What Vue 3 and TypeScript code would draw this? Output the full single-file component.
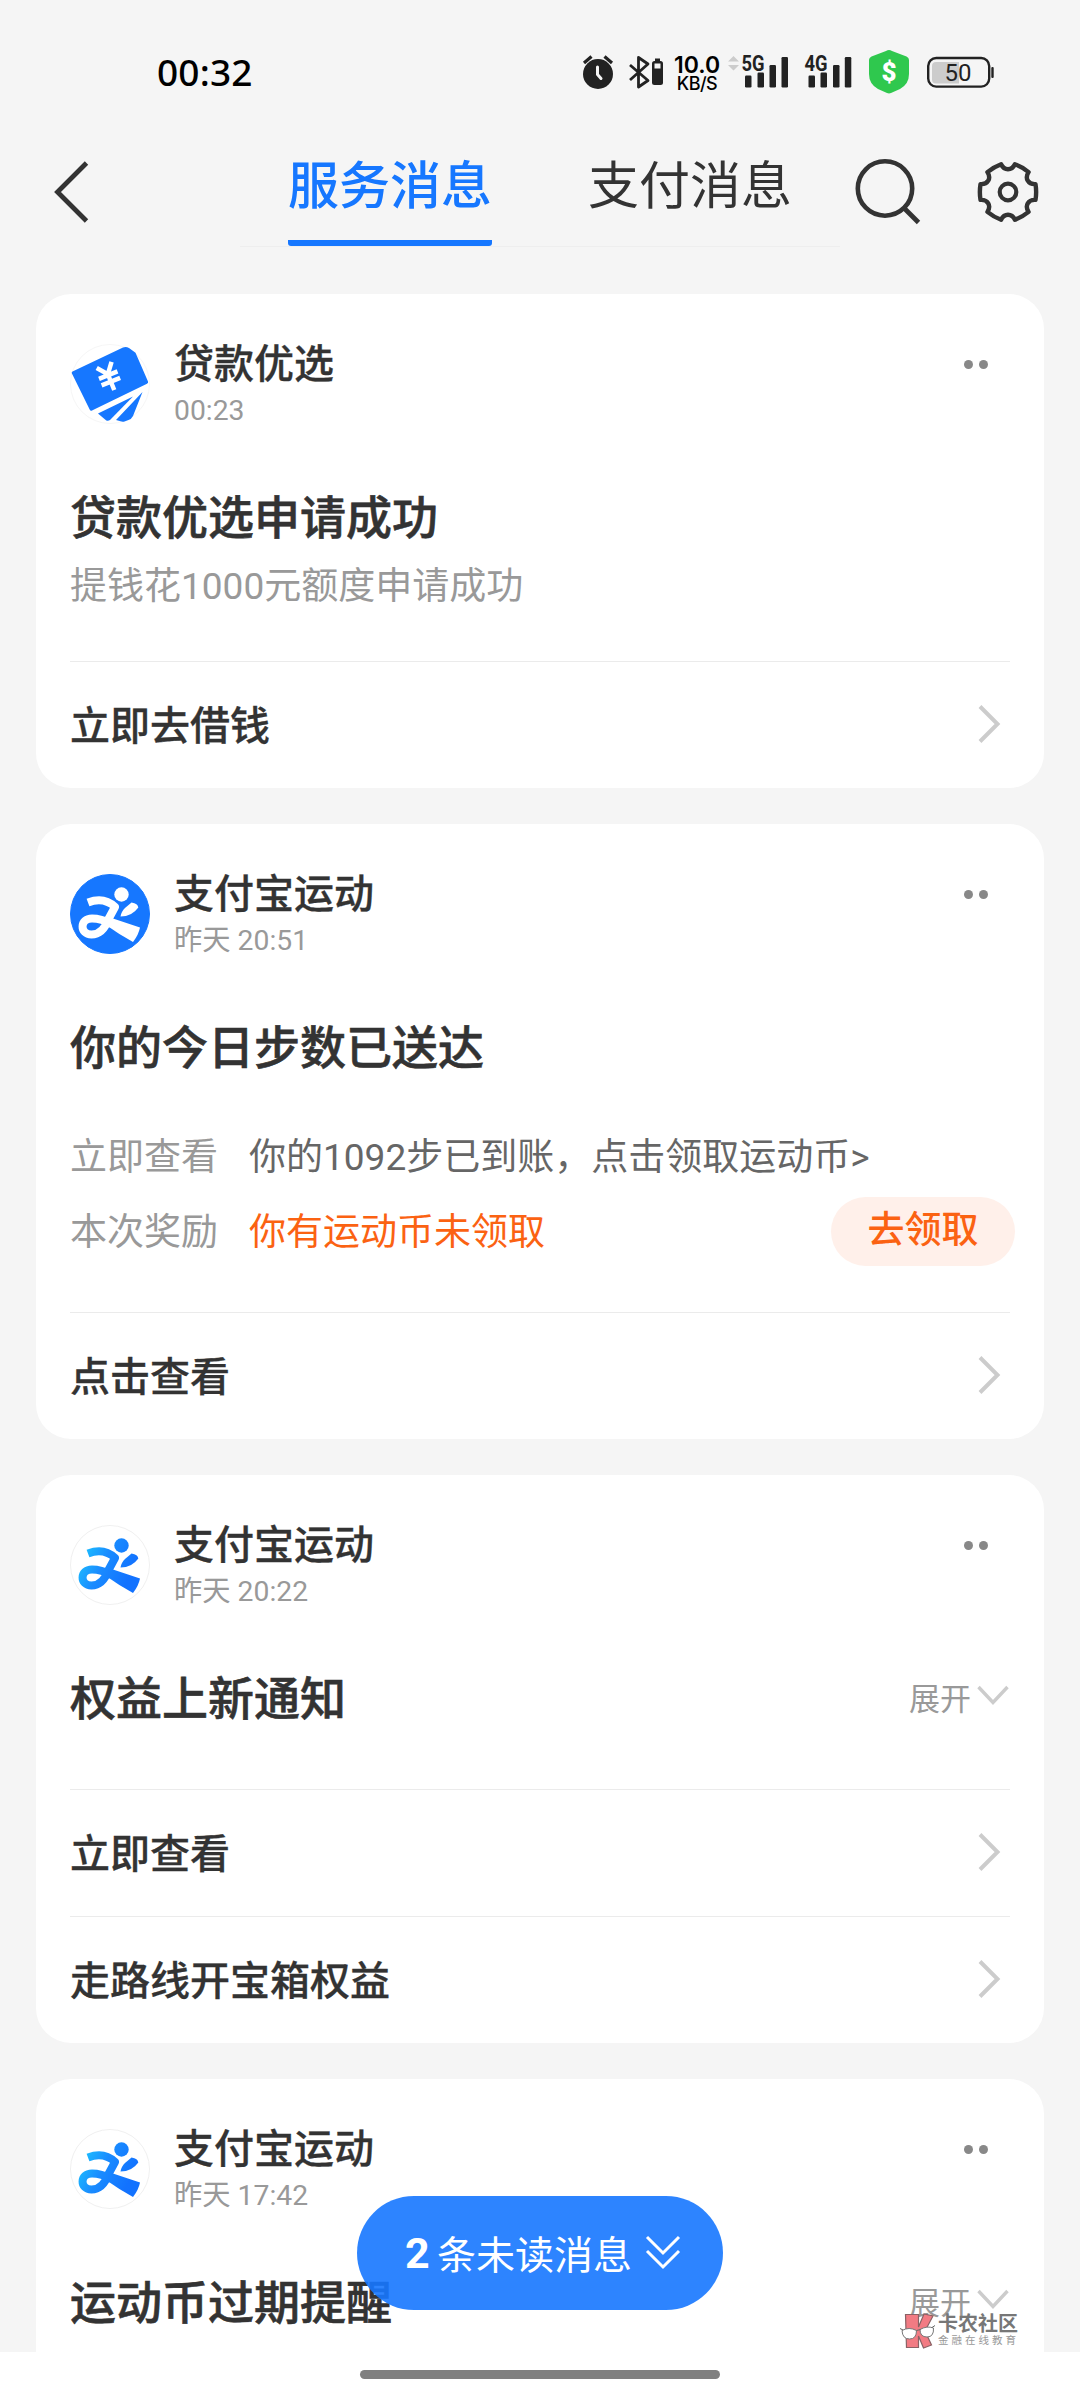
<script setup lang="ts">
interface DetailRow {
  label: string
  value: string
  highlight?: boolean
  button?: string
}

interface Message {
  id: number
  icon: 'loan' | 'sport-solid' | 'sport-light'
  sender: string
  time: string
  title: string
  summary?: string
  rows?: DetailRow[]
  expandable?: boolean
  actions: string[]
}

const messages: Message[] = [
  {
    id: 1,
    icon: 'loan',
    sender: '贷款优选',
    time: '00:23',
    title: '贷款优选申请成功',
    summary: '提钱花1000元额度申请成功',
    actions: ['立即去借钱'],
  },
  {
    id: 2,
    icon: 'sport-solid',
    sender: '支付宝运动',
    time: '昨天 20:51',
    title: '你的今日步数已送达',
    rows: [
      { label: '立即查看', value: '你的1092步已到账，点击领取运动币>' },
      { label: '本次奖励', value: '你有运动币未领取', highlight: true, button: '去领取' },
    ],
    actions: ['点击查看'],
  },
  {
    id: 3,
    icon: 'sport-light',
    sender: '支付宝运动',
    time: '昨天 20:22',
    title: '权益上新通知',
    expandable: true,
    actions: ['立即查看', '走路线开宝箱权益'],
  },
  {
    id: 4,
    icon: 'sport-light',
    sender: '支付宝运动',
    time: '昨天 17:42',
    title: '运动币过期提醒',
    expandable: true,
    actions: [],
  },
]

const unread = 2

// Six-toothed outline for the settings icon, centred on the origin.
function gearOutline(): string {
  const at = (deg: number, r: number): string => {
    const a = (deg * Math.PI) / 180
    return `${(r * Math.cos(a)).toFixed(2)} ${(r * Math.sin(a)).toFixed(2)}`
  }
  let d = `M${at(-16, 28.6)}`
  for (let k = 0; k < 6; k++) {
    const c = k * 60
    d += `Q${at(c, 28.8)} ${at(c + 16, 28.6)}`
    d += `C${at(c + 20, 21.5)} ${at(c + 40, 21.5)} ${at(c + 44, 28.6)}`
  }
  return d + 'Z'
}

const gear = gearOutline()
</script>

<template>
  <div class="screen">
    <div class="status">
      <span class="clock">00:32</span>
      <div class="indicators">
        <svg width="42" height="50" viewBox="580 48 42 50">
          <circle cx="598" cy="74" r="15" fill="#222" />
          <path d="M584 63l7.500-6.500M612 63l-7.500-6.500" stroke="#222" stroke-width="3.200" fill="none" />
          <path d="M597.500 67v7.500l3.500 4" stroke="#f5f5f5" stroke-width="3" fill="none" stroke-linecap="round" />
        </svg>
        <svg width="48" height="50" viewBox="622 48 48 50">
          <path d="M630 65l18 15.500-9.500 6.500V57.500l9.500 6.500-18 16" stroke="#222" stroke-width="2.800" fill="none" stroke-linejoin="round" />
          <rect x="652" y="61" width="11" height="24" rx="2.500" fill="#222" />
          <rect x="655" y="58.500" width="5" height="3" fill="#222" />
          <rect x="654.500" y="63.500" width="6" height="5" fill="#f5f5f5" />
        </svg>
        <div class="speed">
          <span class="speed-num">10.0</span>
          <span class="speed-unit">KB/S</span>
        </div>
        <svg width="72" height="50" viewBox="724 48 72 50">
          <path d="M728 61.500l5.500-5.500 5.500 5.500zM728 65l5.500 5.500 5.500-5.500z" fill="#ccc" />
          <text x="741.500" y="70.500" class="net" textLength="23" lengthAdjust="spacingAndGlyphs">5G</text>
          <g fill="#222">
            <rect x="745" y="75.500" width="6.500" height="12" rx="1.200" />
            <rect x="757.500" y="72.500" width="6.500" height="15" rx="1.200" />
            <rect x="769.500" y="65" width="6.500" height="22.500" rx="1.200" />
            <rect x="781.500" y="57" width="6.500" height="30.500" rx="1.200" />
          </g>
        </svg>
        <svg width="64" height="50" viewBox="796 48 64 50">
          <text x="804.500" y="70.500" class="net" textLength="23" lengthAdjust="spacingAndGlyphs">4G</text>
          <g fill="#222">
            <rect x="808.500" y="75.500" width="6.500" height="12" rx="1.200" />
            <rect x="820.500" y="72.500" width="6.500" height="15" rx="1.200" />
            <rect x="833" y="65" width="6.500" height="22.500" rx="1.200" />
            <rect x="844.800" y="57" width="6.500" height="30.500" rx="1.200" />
          </g>
        </svg>
        <svg width="58" height="50" viewBox="860 48 58 50">
          <path d="M889 50q1.500 0 3 1l14.500 5.500q2.500 1 2.500 3.500v14q0 10-9 15l-9 4q-2 .8-4 0l-9-4q-9-5-9-15V60q0-2.500 2.500-3.500L886 51q1.500-1 3-1z" fill="#2fc84e" />
          <text x="889" y="81" text-anchor="middle" class="dollar">$</text>
        </svg>
        <svg width="82" height="50" viewBox="918 48 82 50">
          <rect x="928.200" y="58" width="61" height="28.600" rx="8" fill="none" stroke="#222" stroke-width="2.400" />
          <path d="M936 62h23v21.500h-23q-4 0-4-4V66q0-4 4-4z" fill="#ccc" />
          <rect x="991.300" y="67" width="2.400" height="11" rx="1" fill="#222" />
          <text x="958" y="81" text-anchor="middle" class="level">50</text>
        </svg>
      </div>
    </div>

    <div class="header">
      <svg class="back" width="40" height="64" viewBox="50 160 40 64">
        <path d="M86.500 163L57.500 192l29 29" fill="none" stroke="#333" stroke-width="4.800" />
      </svg>
      <div class="tabs">
        <span class="tab active">服务消息</span>
        <span class="tab">支付消息</span>
      </div>
      <div class="tools">
        <svg width="68" height="68" viewBox="853 158 68 68">
          <circle cx="885" cy="188.500" r="27.200" fill="none" stroke="#333" stroke-width="4.600" />
          <path d="M904 208l14.500 14.500" stroke="#333" stroke-width="4.800" />
        </svg>
        <svg width="68" height="68" viewBox="-34 -34 68 68">
          <path :d="gear" fill="none" stroke="#333" stroke-width="4.400" stroke-linejoin="round" />
          <circle r="8.300" fill="none" stroke="#333" stroke-width="4.200" />
        </svg>
      </div>
    </div>

    <div class="list">
      <div v-for="m in messages" :key="m.id" class="card">
        <div class="body" :class="{ detailed: m.rows, short: m.expandable }">
          <div class="head">
            <svg v-if="m.icon === 'loan'" class="avatar" width="80" height="80" viewBox="0 0 80 80">
              <circle cx="40" cy="40" r="39.500" fill="#fff" stroke="#f6f6f6" />
              <g fill="#1677ff">
                <path d="M2.500 27.500L53 3.600q3-1.300 6 .5l6.500 4.700L78 37.500q.6 1.500-1 2.300L22 66.500q-1.500.7-2.200-.8L1.800 29.200q-.4-1.200.7-1.700z" />
                <path d="M28 69.500L63 52.500 40 76q-2 1.500-4 .3z" />
                <path d="M72.500 48L63 72q-1.500 3-4.500 4l-4 1.500q-2 .5-4-.2L46 76z" />
              </g>
              <g transform="translate(39 33) rotate(-22)" fill="none" stroke="#fff" stroke-width="4.500">
                <path d="M-8-13L0-3 8-13M0-3v17M-10-2h20M-10 5h20" />
              </g>
            </svg>
            <svg v-else class="avatar" :class="m.icon" width="80" height="80" viewBox="0 0 80 80">
              <defs>
                <linearGradient :id="'run' + m.id" gradientUnits="userSpaceOnUse" x1="12" y1="26" x2="60" y2="50">
                  <stop offset="0" stop-color="#1cc0ff" />
                  <stop offset="0.450" stop-color="#1a8cff" />
                  <stop offset="1" stop-color="#1272ff" />
                </linearGradient>
              </defs>
              <circle class="disc" cx="40" cy="40" r="39.500" />
              <g :fill="m.icon === 'sport-solid' ? '#fff' : `url(#run${m.id})`">
                <circle cx="51.500" cy="20.500" r="7.200" />
                <path d="M50.500 42.500Q51.500 37 55 34l6.500-5.500q6.500 1 6.800 5Q62 42.500 50.500 42.500z" />
                <path d="M40 43.500L70 53.500q-1.500 7.500-7 14.500Q50 61 36 51z" />
                <path
                  d="M18 28.500Q34 22.500 45 33L38.500 45Q33 60.500 21.500 60.500C9.500 60.500 9.500 44.500 22 44.500Q31 44.500 42 50"
                  fill="none"
                  :stroke="m.icon === 'sport-solid' ? '#fff' : `url(#run${m.id})`"
                  stroke-width="8"
                  stroke-linejoin="round"
                />
              </g>
            </svg>
            <div class="who">
              <span class="sender">{{ m.sender }}</span>
              <span class="time">{{ m.time }}</span>
            </div>
            <div class="more"><i></i><i></i></div>
          </div>
          <div class="title-row">
            <span class="title">{{ m.title }}</span>
            <span v-if="m.expandable" class="expand">
              展开
              <svg width="32" height="22" viewBox="0 0 32 22">
                <path d="M1.500 2L16 17.500 30.500 2" fill="none" stroke="#ccc" stroke-width="3.400" />
              </svg>
            </span>
          </div>
          <div v-if="m.summary" class="summary">{{ m.summary }}</div>
          <div v-if="m.rows" class="details">
            <div v-for="r in m.rows" :key="r.label" class="detail">
              <span class="label">{{ r.label }}</span>
              <span class="value" :class="{ highlight: r.highlight }">{{ r.value }}</span>
              <span v-if="r.button" class="claim">{{ r.button }}</span>
            </div>
          </div>
        </div>
        <div v-for="a in m.actions" :key="a" class="action">
          <span>{{ a }}</span>
          <svg width="24" height="40" viewBox="0 0 24 40">
            <path d="M3 2.500L20.500 20 3 37.500" fill="none" stroke="#ccc" stroke-width="4" />
          </svg>
        </div>
      </div>
    </div>

    <div class="home"><i></i></div>

    <div class="unread">
      <b>{{ unread }}</b>
      <span>条未读消息</span>
      <svg width="36" height="36" viewBox="0 0 36 36">
        <path d="M2 3l16 16L34 3M2 17l16 16 16-16" fill="none" stroke="#fff" stroke-width="3" />
      </svg>
    </div>

    <div class="community">
      <svg width="36" height="38" viewBox="0 0 36 38">
        <path d="M5.500 2.500h13V15L24 2l9 2-8 15 6.500 14-8 3-5-12v11.500H6.500z" fill="#f27b83" stroke="#8a6265" stroke-width="1.200" />
        <path d="M2 18.500q7-4 14.500 0Q16.500 27 9.500 27T2 18.500zM20 17.500q7-4 13.500-1.500Q34 25 27 25T20 17.500z" fill="#fff" stroke="#777" />
        <path d="M0 16.500l3 1.500M16.500 18.500l4-1M32 15.500l3-2" stroke="#666" fill="none" />
      </svg>
      <div class="community-text">
        <span class="community-name">卡农社区</span>
        <span class="community-sub">金融在线教育</span>
      </div>
    </div>
  </div>
</template>

<style>
body {
  margin: 0;
  background: #f5f5f5;
}
</style>

<style scoped>
.screen {
  position: relative;
  display: flex;
  flex-direction: column;
  width: 1080px;
  height: 2400px;
  overflow: hidden;
  background: #f5f5f5;
  color: #333;
  font-family: Roboto, 'Noto Sans CJK SC', sans-serif;
}

svg {
  display: block;
  flex: none;
}

.status {
  display: flex;
  justify-content: space-between;
  box-sizing: border-box;
  height: 110px;
  padding: 48px 80px 0 157px;
}

.clock {
  font: 500 37px/48px 'Noto Sans', sans-serif;
  letter-spacing: 0.2px;
  color: #000;
}

.indicators {
  display: flex;
}

.speed {
  display: flex;
  flex-direction: column;
  align-items: center;
  width: 54px;
  padding-top: 7px;
  font-family: Inter, sans-serif;
  font-weight: 600;
  color: #000;
  white-space: nowrap;
}

.speed-num {
  font-size: 23px;
  line-height: 20px;
}

.speed-unit {
  font-size: 18px;
  font-weight: 500;
  line-height: 17px;
  letter-spacing: -0.5px;
}

.net {
  font: 700 22px Roboto, sans-serif;
  fill: #222;
}

.dollar {
  font: 900 26px Roboto, sans-serif;
  fill: #fff;
}

.level {
  font: 400 24px Roboto, sans-serif;
  fill: #222;
}

.header {
  display: flex;
  align-items: flex-start;
  height: 184px;
}

.back {
  margin: 50px 0 0 50px;
}

.tabs {
  display: flex;
  gap: 96px;
  box-sizing: border-box;
  width: 600px;
  height: 137px;
  margin-left: 150px;
  padding-left: 48px;
  border-bottom: 1px solid #eee;
}

.tab {
  box-sizing: border-box;
  height: 136px;
  padding-top: 43px;
  font-size: 51px;
  line-height: 67px;
  white-space: nowrap;
}

.tab.active {
  border-bottom: 6px solid #1677ff;
  border-radius: 0 0 3px 3px;
  font-weight: 500;
  color: #1677ff;
}

.tools {
  display: flex;
  gap: 53px;
  padding: 48px 0 0 13px;
}

.list {
  display: flex;
  flex: 1;
  flex-direction: column;
  gap: 36px;
  min-height: 0;
  padding: 0 36px;
  overflow: hidden;
}

.card {
  flex: none;
  padding: 0 34px;
  border-radius: 35px;
  background: #fff;
}

.body {
  box-sizing: border-box;
  height: 367px;
  padding-top: 50px;
}

.body.detailed {
  height: 488px;
}

.body.short {
  height: 314px;
}

.head {
  display: flex;
  height: 80px;
}

.disc {
  fill: #fff;
  stroke: #f0f0f0;
}

.sport-solid .disc {
  fill: #1677ff;
  stroke: #1677ff;
}

.who {
  display: flex;
  flex: 1;
  flex-direction: column;
  margin-left: 24px;
}

.sender {
  margin-top: -4px;
  font-size: 40px;
  font-weight: 500;
  line-height: 50px;
  -webkit-text-stroke: 0.3px;
}

.time {
  font-size: 28.300px;
  line-height: 42px;
  color: #999;
}

.more {
  display: flex;
  gap: 6px;
  padding: 16px 22px 0 0;
}

.more i {
  width: 9px;
  height: 9px;
  border-radius: 50%;
  background: #888;
}

.title-row {
  display: flex;
  align-items: center;
  justify-content: space-between;
  height: 60px;
  margin-top: 62px;
}

.title {
  padding-top: 3px;
  font-size: 46px;
  font-weight: 500;
  line-height: 60px;
  -webkit-text-stroke: 0.6px;
}

.expand {
  display: flex;
  align-items: center;
  gap: 6px;
  padding: 0 1px 2px 0;
  font-size: 31px;
  color: #999;
}

.summary {
  margin-top: 15px;
  font-size: 37px;
  line-height: 51px;
  color: #999;
}

.details {
  margin-top: 43px;
}

.detail {
  display: flex;
  align-items: center;
  height: 75px;
  font-size: 37px;
  line-height: 50px;
  white-space: nowrap;
}

.label {
  width: 179px;
  padding-top: 2px;
  color: #999;
}

.value {
  flex: 1;
  padding-top: 2px;
  color: #666;
}

.value.highlight {
  color: #fb6212;
}

.claim {
  width: 184px;
  height: 69px;
  margin: -1px -5px 0 0;
  border-radius: 35px;
  background: #fff0ea;
  font-weight: 500;
  line-height: 68px;
  text-align: center;
  color: #fb6212;
}

.action {
  display: flex;
  align-items: center;
  justify-content: space-between;
  box-sizing: border-box;
  height: 127px;
  padding: 0 9px 3px 0;
  border-top: 1px solid #ebebeb;
  font-size: 40px;
  font-weight: 500;
  -webkit-text-stroke: 0.3px;
}

.action span {
  padding-bottom: 2px;
}

.home {
  display: flex;
  justify-content: center;
  height: 48px;
  background: #fff;
}

.home i {
  width: 360px;
  height: 9px;
  margin-top: 18px;
  border-radius: 5px;
  background: #808080;
}

.unread {
  position: absolute;
  top: 2196px;
  left: 357px;
  display: flex;
  align-items: center;
  box-sizing: border-box;
  width: 366px;
  height: 114px;
  padding-left: 48px;
  border-radius: 57px;
  background: rgba(22, 119, 255, 0.9);
  font-size: 39px;
  color: #fff;
  white-space: nowrap;
}

.unread b {
  width: 32px;
  font-size: 43px;
}

.unread span {
  padding-bottom: 2px;
}

.unread svg {
  margin: 0 0 2px 13px;
}

.community {
  position: absolute;
  top: 2312px;
  left: 900px;
  display: flex;
}

.community-text {
  display: flex;
  flex-direction: column;
  margin: 3px 0 0 2px;
  white-space: nowrap;
}

.community-name {
  font-size: 20px;
  font-weight: 700;
  line-height: 19px;
  color: #777;
}

.community-sub {
  margin-top: 1px;
  font-size: 10.500px;
  line-height: 12px;
  letter-spacing: 3px;
  color: #999;
}
</style>
